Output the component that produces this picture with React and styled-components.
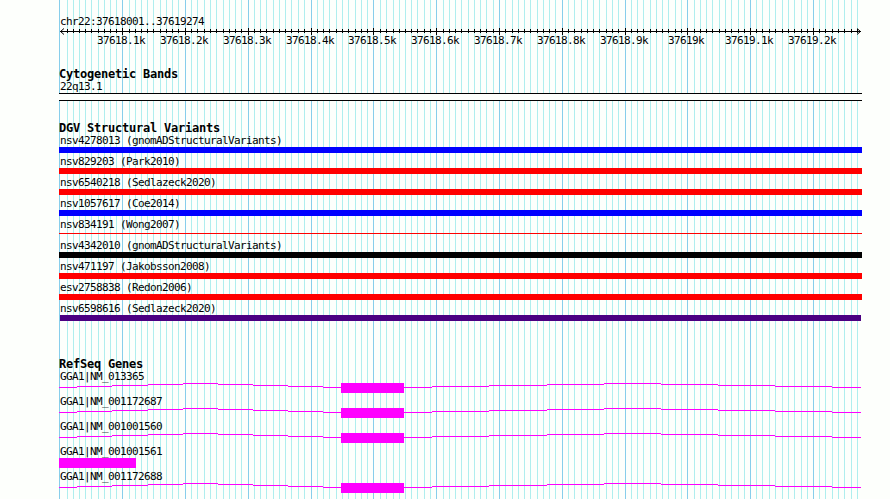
import styled, { createGlobalStyle } from "styled-components";

const LEFT = 59;

const majors = [122, 185, 248, 311, 373, 436, 499, 562, 625, 687, 750, 813];
const minors = [
    67, 73, 79, 85, 91, 98, 104, 110, 116,
    129, 135, 141, 147, 153, 160, 166, 172, 178,
    191, 197, 204, 210, 216, 223, 229, 235, 241,
    254, 260, 266, 273, 279, 285, 291, 298, 304,
    317, 323, 329, 336, 342, 348, 355, 361, 367,
    380, 386, 393, 399, 405, 411, 417, 424, 430,
    443, 449, 455, 461, 468, 474, 480, 486, 493,
    505, 512, 518, 524, 530, 537, 543, 549, 555,
    568, 574, 581, 587, 593, 599, 606, 612, 618,
    631, 637, 643, 650, 656, 662, 668, 675, 681,
    694, 700, 706, 712, 719, 725, 731, 738, 744,
    756, 762, 769, 775, 782, 788, 794, 801, 807,
    819, 825, 832, 838, 844, 851, 857,
];
const tickLabels = [
    "37618.1k", "37618.2k", "37618.3k", "37618.4k", "37618.5k", "37618.6k",
    "37618.7k", "37618.8k", "37618.9k", "37619k", "37619.1k", "37619.2k",
];

const variants = [
    { name: "nsv4278013 (gnomADStructuralVariants)", color: "#0000ff" },
    { name: "nsv829203 (Park2010)", color: "#ff0000" },
    { name: "nsv6540218 (Sedlazeck2020)", color: "#ff0000" },
    { name: "nsv1057617 (Coe2014)", color: "#0000ff" },
    { name: "nsv834191 (Wong2007)", color: "#ff0000", thin: true },
    { name: "nsv4342010 (gnomADStructuralVariants)", color: "#000000" },
    { name: "nsv471197 (Jakobsson2008)", color: "#ff0000" },
    { name: "esv2758838 (Redon2006)", color: "#ff0000" },
    { name: "nsv6598616 (Sedlazeck2020)", color: "#4b0082", inset: true },
];

const genes = [
    { name: "GGA1|NM_013365" },
    { name: "GGA1|NM_001172687" },
    { name: "GGA1|NM_001001560" },
    { name: "GGA1|NM_001001561", short: true },
    { name: "GGA1|NM_001172688" },
];

// start, end, y of each step of the intron lines
const introns = [
    [59, 77, 4], [77, 112, 3], [112, 148, 2], [148, 183, 1], [183, 218, 0],
    [218, 253, 1], [253, 288, 2], [288, 323, 3], [323, 341, 4],
    [404, 432, 4], [432, 489, 3], [489, 547, 2], [547, 604, 1], [604, 661, 0],
    [661, 718, 1], [718, 775, 2], [775, 832, 3], [832, 861, 4],
];

const GridLines = () => (
    <GridSvg width="890" height="499" shapeRendering="crispEdges">
        {minors.map((x) => <rect key={x} x={x} y="0" width="1" height="499" fill="#afeeee" />)}
        {[LEFT, ...majors].map((x) => <rect key={x} x={x} y="0" width="1" height="499" fill="#87ceeb" />)}
    </GridSvg>
)

const Ruler = () => (
    <RulerSvg width="804" height="21" viewBox="59 27 804 21">
        <g shapeRendering="crispEdges">
            <rect x="60" y="31" width="801" height="1" />
            {minors.map((x) => <rect key={x} x={x} y="29" width="1" height="4" />)}
            {majors.map((x) => <rect key={x} x={x} y="28" width="1" height="7" />)}
        </g>
        <path d="M64 28.5 L60.5 31.5 L64 34.5 M857 28.5 L860.5 31.5 L857 34.5" fill="none" stroke="#000" />
        {majors.map((x, i) => (
            <text key={x} x={x - tickLabels[i].length * 3 - 1} y="44">{tickLabels[i]}</text>
        ))}
    </RulerSvg>
)

const Gene = ({ short }) => (
    <GeneSvg width="804" height="10" viewBox="59 0 804 10" shapeRendering="crispEdges">
        {short
            ? <rect x="59" y="0" width="77" height="10" />
            : <>
                {introns.map(([start, end, y]) => (
                    <rect key={start} x={start} y={y} width={end - start} height="1" />
                ))}
                <rect x="341" y="0" width="63" height="10" />
            </>}
    </GeneSvg>
)

const App = () => {
    return (
        <>
        <GlobalStyle />
        <Browser>
            <GridLines />
            <Tracks>
                <Region>chr22:37618001..37619274</Region>
                <Ruler />
                <Track $gap={19}>
                    <Title>Cytogenetic Bands</Title>
                    <Label>22q13.1</Label>
                    <Band />
                </Track>
                <Track $gap={20}>
                    <Title>DGV Structural Variants</Title>
                    {variants.map((v) => (
                        <Variant key={v.name}>
                            <Label>{v.name}</Label>
                            <Bar $color={v.color} $thin={v.thin} $inset={v.inset} />
                        </Variant>
                    ))}
                </Track>
                <Track $gap={34}>
                    <Title>RefSeq Genes</Title>
                    {genes.map((g) => (
                        <GeneRow key={g.name}>
                            <Label>{g.name}</Label>
                            <Gene short={g.short} />
                        </GeneRow>
                    ))}
                </Track>
            </Tracks>
        </Browser>
        </>
    )
}

const GlobalStyle = createGlobalStyle`
    body {
        margin: 0;
        background: #fdfffc;
        overflow: hidden;
    }
`

const Browser = styled.div`
    position: relative;
    width: 890px;
    height: 499px;
    overflow: hidden;
    color: #000;
    font-family: "DejaVu Sans Mono", monospace;
    font-size: 11px;
    letter-spacing: -0.623px;
`

const GridSvg = styled.svg`
    position: absolute;
    top: 0;
    left: 0;
`

const Tracks = styled.div`
    position: relative;
    display: flex;
    flex-direction: column;
    width: 803px;
    padding: 15px 0 0 59px;
`

const Label = styled.div`
    height: 13px;
    padding-left: 1px;
    line-height: 13px;
    white-space: pre;
`

const Region = styled(Label)`
    height: 12px;
`

const RulerSvg = styled.svg`
    display: block;
    flex-shrink: 0;
    overflow: visible;
`

const Track = styled.section`
    padding-top: ${(props) => props.$gap}px;
`

const Title = styled.h2`
    height: 13px;
    margin: 0;
    font-size: 12px;
    line-height: 14px;
    letter-spacing: -0.225px;
    white-space: pre;
`

const Band = styled.div`
    box-sizing: border-box;
    height: 8px;
    background: #fdfffc;
    border-top: 1px solid #000;
    border-bottom: 1px solid #000;
`

const Variant = styled.div`
    height: 21px;
`

const Bar = styled.div`
    height: ${(props) => (props.$thin ? 1 : 6)}px;
    margin: ${(props) => (props.$thin ? "2px" : "0")} ${(props) => (props.$inset ? "1px" : "0")} 0;
    background: ${(props) => props.$color};
`

const GeneRow = styled.div`
    height: 25px;
`

const GeneSvg = styled.svg`
    display: block;
    fill: #ff00ff;
`

export default App
